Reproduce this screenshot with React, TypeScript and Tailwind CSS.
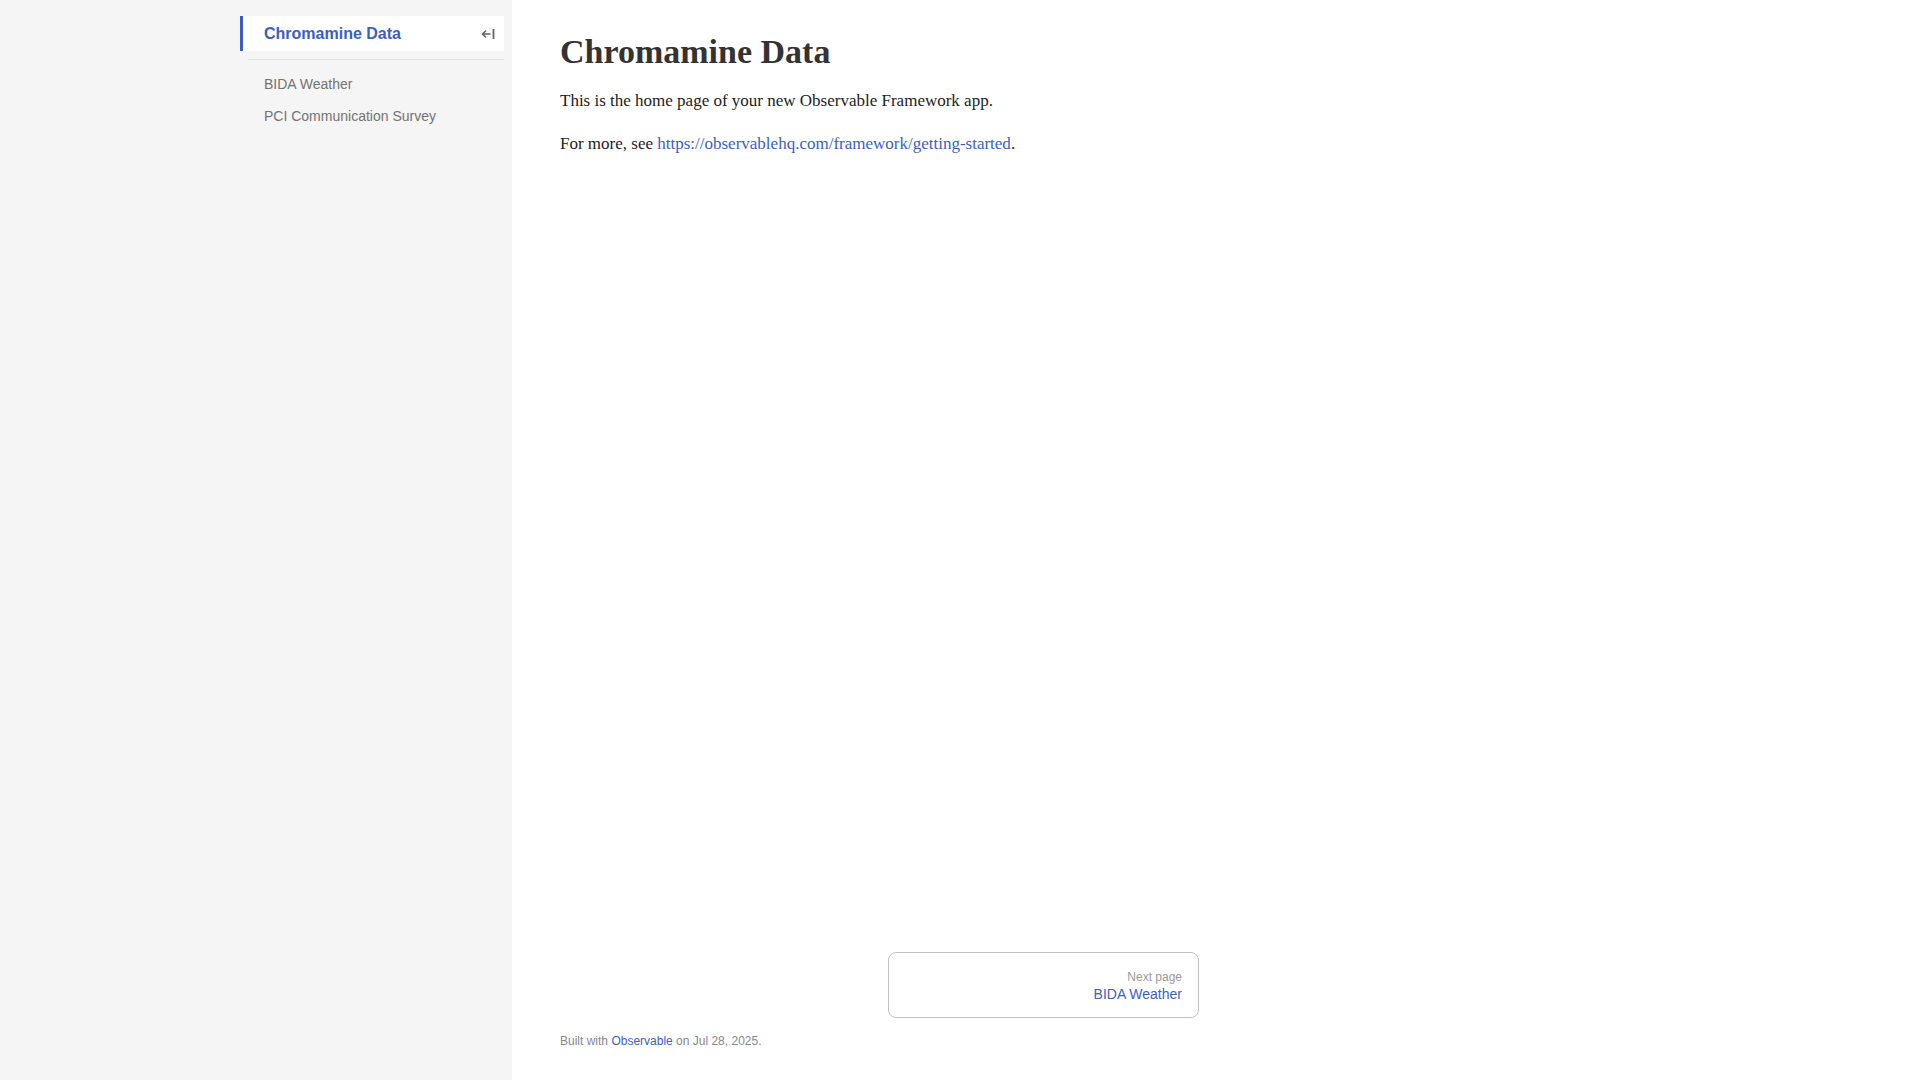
import { ReactNode } from 'react'

const sans = "font-['Liberation_Sans',Arial,sans-serif]"
const serif = "font-['Liberation_Serif','Times_New_Roman',serif]"

function CollapseIcon() {
  return (
    <svg width="14" height="12" viewBox="0 0 14 12" fill="none" aria-hidden="true">
      <path d="M1.5 6h8" stroke="#666" strokeWidth="1.6" />
      <path d="M5 2.5 1.5 6 5 9.5" stroke="#666" strokeWidth="1.6" fill="none" />
      <path d="M12.5 1v10" stroke="#666" strokeWidth="1.8" />
    </svg>
  )
}

function NavLink({ children }: { children: ReactNode }) {
  return (
    <a href="#" className="block pl-6 py-2 text-[14px] leading-[16px] text-[#737373]">
      {children}
    </a>
  )
}

export default function App() {
  return (
    <div className={`flex min-h-screen bg-white ${sans}`}>
      <aside className="w-[512px] shrink-0 bg-[#f5f5f5] pl-[240px] pr-[8px] pt-4">
        <div className="flex h-[35px] items-center justify-between border-l-[3px] border-[#3b5fc0] bg-white pl-[21px] pr-[9px]">
          <span className="text-[16px] font-bold text-[#3b5fc0]">Chromamine Data</span>
          <CollapseIcon />
        </div>
        <div className="ml-2 mt-2 h-px bg-[#e2e2e2]" />
        <nav className="mt-2">
          <NavLink>BIDA Weather</NavLink>
          <NavLink>PCI Communication Survey</NavLink>
        </nav>
      </aside>

      <main className="flex min-h-screen w-[687px] flex-col pl-[48px]">
        <div className={`${serif} text-[#222]`}>
          <h1 className="mt-8 text-[34px] font-bold leading-[1.15] text-[#333]">Chromamine Data</h1>
          <p className="mt-[17px] text-[17px] leading-[1.5]">
            This is the home page of your new Observable Framework app.
          </p>
          <p className="mt-[17px] text-[17px] leading-[1.5]">
            For more, see{' '}
            <a href="#" className="text-[#3b5fc0]">
              https://observablehq.com/framework/getting-started
            </a>
            .
          </p>
        </div>

        <div className="flex-1" />

        <div className="grid grid-cols-2 gap-4 pl-px">
          <div />
          <a
            href="#"
            className="flex h-[66px] flex-col items-end rounded-lg border border-[#c2c2c2] pr-4 pt-[18px]"
          >
            <span className="text-[12px] leading-[13px] text-[#999]">Next page</span>
            <span className="text-[14px] leading-[20px] text-[#3b5fc0]">BIDA Weather</span>
          </a>
        </div>

        <footer className="mb-[31px] mt-[15px] text-[12px] leading-[16px] text-[#888]">
          Built with{' '}
          <a href="#" className="text-[#3b5fc0]">
            Observable
          </a>{' '}
          on Jul 28, 2025.
        </footer>
      </main>
    </div>
  )
}
